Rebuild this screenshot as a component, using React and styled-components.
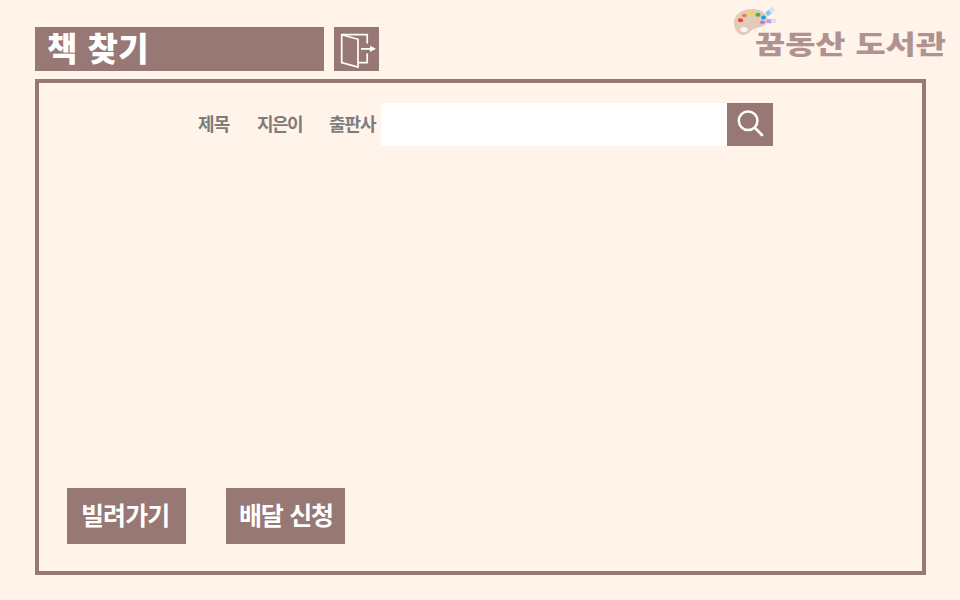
import React from "react";
import styled, { createGlobalStyle } from "styled-components";

const brown = "#987874";

const GlobalStyle = createGlobalStyle`
  * { box-sizing: border-box; }
  body { margin: 0; background: #fff3ea; font-family: "Noto Sans CJK KR", "Noto Sans", sans-serif; }
  button, input { font-family: inherit; border: 0; padding: 0; margin: 0; border-radius: 0; }
`;

const Page = styled.div`
  width: 960px;
  height: 600px;
  overflow: hidden;
  display: flex;
  flex-direction: column;
  padding: 0 34px 25px 35px;
`;

const Header = styled.header`
  height: 79px;
  flex: none;
  display: flex;
  align-items: flex-start;
  gap: 10px;
`;

const Title = styled.h1`
  margin: 27px 0 0;
  width: 289px;
  height: 44px;
  padding-left: 12px;
  background: ${brown};
  color: #fff;
  font-size: 33px;
  font-weight: 900;
  letter-spacing: 0.3px;
  word-spacing: 2px;
  line-height: 40px;
  white-space: nowrap;
`;

const ExitButton = styled.button`
  margin-top: 27px;
  width: 45px;
  height: 44px;
  background: ${brown};
  display: flex;
`;

const Logo = styled.div`
  margin: 6px -22px 0 auto;
  width: 215px;
  display: flex;
`;

const Palette = styled.svg`
  width: 46px;
  height: 32px;
  flex: none;
`;

const LogoText = styled.span`
  margin: 17px 0 0 -24px;
  color: #b09390;
  font-size: 26px;
  font-weight: 900;
  word-spacing: 2px;
  line-height: 39px;
  white-space: nowrap;
  transform: scaleX(1.26);
  transform-origin: left;
`;

const Frame = styled.main`
  flex: 1;
  border: 4px solid ${brown};
  padding: 20px 28px 27px;
  display: flex;
  flex-direction: column;
  justify-content: space-between;
`;

const SearchRow = styled.form`
  height: 43px;
  margin-left: 131px;
  display: flex;
`;

const Criterion = styled.span`
  width: ${({ $width }) => $width}px;
  flex: none;
  color: #7f7d7b;
  font-size: 18px;
  font-weight: 700;
  letter-spacing: ${({ $spacing = -1 }) => $spacing}px;
  line-height: 40px;
  white-space: nowrap;
`;

const SearchInput = styled.input`
  width: 346px;
  height: 43px;
  background: #fff;
  outline: 0;
  font-size: 18px;
`;

const SearchButton = styled.button`
  width: 46px;
  height: 43px;
  background: ${brown};
  display: flex;
`;

const Actions = styled.div`
  display: flex;
  gap: 40px;
`;

const ActionButton = styled.button`
  width: 119px;
  height: 56px;
  padding: 0 0 4px ${({ $inset }) => $inset}px;
  background: ${brown};
  color: #fff;
  font-size: 25px;
  font-weight: 700;
  letter-spacing: ${({ $spacing }) => $spacing}px;
  word-spacing: 2.5px;
  line-height: 52px;
  text-align: left;
  white-space: nowrap;
`;

const PaletteIcon = () => (
  <Palette viewBox="0 0 46 32" aria-hidden="true">
    <path d="M1 18C0 10 8 3 19 3c8 0 13 3 15 8 2 6-3 10-10 11-6 1-6 4-10 6C8 31 2 27 1 18Z" fill="#e2cbbb" />
    <ellipse cx="11" cy="23.5" rx="3.7" ry="2.6" fill="#fff4ed" />
    <ellipse cx="7.5" cy="14.3" rx="2.6" ry="2" fill="#ed4726" />
    <ellipse cx="11.3" cy="9.5" rx="2.4" ry="1.8" fill="#ff7152" />
    <ellipse cx="18" cy="8" rx="2.5" ry="2" fill="#ffd33b" />
    <ellipse cx="25" cy="8.8" rx="2.6" ry="2" fill="#55b22b" />
    <ellipse cx="30.5" cy="11.5" rx="2.4" ry="1.9" fill="#169fe0" />
    <ellipse cx="29.5" cy="16.3" rx="2.5" ry="1.7" fill="#b77ada" />
    <path d="m33.5 8.5 5-4" stroke="#83c8ed" strokeWidth="4.5" />
    <path d="m37 5.5 4-3" stroke="#dce3e6" strokeWidth="5" />
    <path d="M33.5 15.2h5" stroke="#c49ce5" strokeWidth="4" />
    <path d="M38.5 14.8H43" stroke="#e2dfe4" strokeWidth="4.5" />
  </Palette>
);

const ExitIcon = () => (
  <svg width="45" height="44" viewBox="0 0 45 44" fill="none" stroke="#fff" strokeWidth="1.7" aria-hidden="true">
    <path d="M7.7 7.8 24 12.3v27.8L7.7 35.6ZM7.5 7.7h25.7v8.8M33.2 26.5v9.2H24M27 21.8h10" />
    <path d="m36 18.7 6 3.1-6 3.1Z" fill="#fff" stroke="none" />
  </svg>
);

const SearchIcon = () => (
  <svg width="46" height="43" viewBox="0 0 46 43" fill="none" stroke="#fff" aria-hidden="true">
    <circle cx="21.1" cy="17.8" r="9.3" strokeWidth="2.5" />
    <path d="m28 25 7 7" strokeWidth="2.7" strokeLinecap="round" />
  </svg>
);

export default function App() {
  return (
    <>
      <GlobalStyle />
      <Page>
        <Header>
          <Title>책 찾기</Title>
          <ExitButton aria-label="나가기"><ExitIcon /></ExitButton>
          <Logo>
            <PaletteIcon />
            <LogoText>꿈동산 도서관</LogoText>
          </Logo>
        </Header>
        <Frame>
          <SearchRow onSubmit={(e) => e.preventDefault()}>
            <Criterion $width={59} $spacing={-0.7}>제목</Criterion>
            <Criterion $width={72} $spacing={-1.5}>지은이</Criterion>
            <Criterion $width={52}>출판사</Criterion>
            <SearchInput aria-label="검색어" />
            <SearchButton aria-label="검색"><SearchIcon /></SearchButton>
          </SearchRow>
          <Actions>
            <ActionButton $inset={14} $spacing={-0.9}>빌려가기</ActionButton>
            <ActionButton $inset={13} $spacing={-1.3}>배달 신청</ActionButton>
          </Actions>
        </Frame>
      </Page>
    </>
  );
}
